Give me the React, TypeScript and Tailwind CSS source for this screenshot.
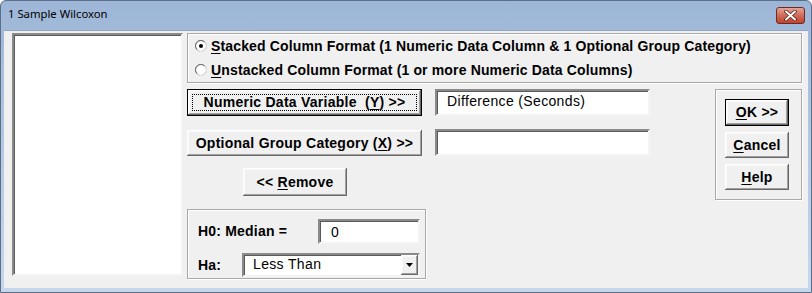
import React from "react"

const ui = { fontFamily: '"Liberation Sans", Arial, sans-serif' }
const title = { fontFamily: '"Noto Sans", "Open Sans", sans-serif' }

// 3D raised edge used on every push button
const raised =
  "bg-[#f0f0f0] shadow-[inset_-1px_-1px_0_#696969,inset_1px_1px_0_#ffffff,inset_-2px_-2px_0_#a0a0a0,inset_2px_2px_0_#f8f8f8]"
const sunken =
  "bg-white border-2 border-t-[#8a8a8a] border-l-[#8a8a8a] border-b-[#f4f4f4] border-r-[#f4f4f4] shadow-[inset_1px_1px_0_#5a5a5a]"
const etched = "border border-[#a9a9a9] shadow-[1px_1px_0_#ffffff,inset_1px_1px_0_#ffffff]"

function U({ children }: { children: React.ReactNode }) {
  return <span className="underline underline-offset-2 decoration-1">{children}</span>
}

function Radio({ checked }: { checked?: boolean }) {
  return (
    <svg width="12" height="12" viewBox="0 0 12 12" className="shrink-0">
      <circle cx="6" cy="6" r="5.5" fill="#ffffff" stroke="#a0a0a0" />
      <path d="M2 9.5 A5 5 0 0 1 9.5 2" stroke="#6a6a6a" fill="none" />
      <path d="M10 2.5 A5 5 0 0 1 2.5 10" stroke="#e8e8e8" fill="none" />
      {checked && <circle cx="6" cy="6" r="2" fill="#000000" />}
    </svg>
  )
}

function Button({
  children,
  isDefault,
  focus,
  className = "",
}: {
  children: React.ReactNode
  isDefault?: boolean
  focus?: boolean
  className?: string
}) {
  return (
    <div
      className={`${raised} ${isDefault ? "border border-black" : ""} flex items-center justify-center text-[14px] tracking-[0.25px] font-bold text-black ${className}`}
    >
      {focus ? (
        <div className="border border-dotted border-black w-[calc(100%-8px)] h-[calc(100%-8px)] flex items-center justify-center">
          {children}
        </div>
      ) : (
        children
      )}
    </div>
  )
}

export default function App() {
  return (
    <div
      className="w-[812px] h-[293px] flex flex-col border border-[#5a6f88] rounded-t-[6px] bg-gradient-to-b from-[#9db6d7] via-[#b3c8e3] to-[#c6d7ec] px-[3px] pb-[4px]"
      style={ui}
    >
      {/* title bar */}
      <div className="h-[29px] flex items-center justify-between pl-[4px] pr-[3px] pb-[3px]">
        <span className="text-[11.3px] text-black" style={title}>
          1 Sample Wilcoxon
        </span>
        <div className="w-[29px] h-[17px] mt-[2px] rounded-[3px] border border-[#6b2a24] bg-gradient-to-b from-[#e4a597] via-[#cf6a58] to-[#c2412e] flex items-center justify-center">
          <svg width="13" height="11" viewBox="0 0 13 11">
            <path d="M2 1.5 L11 9.5 M11 1.5 L2 9.5" stroke="#5a1e18" strokeWidth="3.6" strokeLinecap="round" />
            <path d="M2 1.5 L11 9.5 M11 1.5 L2 9.5" stroke="#ffffff" strokeWidth="2" strokeLinecap="round" />
          </svg>
        </div>
      </div>

      {/* client area */}
      <div className="flex-1 bg-[#f0f0f0] flex pl-[8px] pt-[3px] border-t border-[#8fa6c2]">
        <div className={`${sunken} w-[171px] h-[243px] -mt-px`} />

        <div className="ml-[4px] w-[615px] flex flex-col -mt-px">
          {/* input format */}
          <div className={`${etched} h-[50px] flex flex-col justify-center gap-[8px] pl-[7px] text-[14px] tracking-[0.15px] font-bold`}>
            <div className="flex items-center gap-[4px] h-[16px]">
              <Radio checked />
              <span>
                <U>S</U>tacked Column Format (1 Numeric Data Column &amp; 1 Optional Group Category)
              </span>
            </div>
            <div className="flex items-center gap-[4px] h-[16px]">
              <Radio />
              <span>
                <U>U</U>nstacked Column Format (1 or more Numeric Data Columns)
              </span>
            </div>
          </div>

          <div className="flex mt-[6px]">
            {/* left controls */}
            <div className="w-[239px] flex flex-col">
              <Button isDefault focus className="w-[235px] h-[27px]">
                <span className="whitespace-pre">
                  Numeric Data Variable  (<U>Y</U>) &gt;&gt;
                </span>
              </Button>
              <Button className="w-[235px] h-[26px] mt-[14px]">
                <span className="whitespace-pre">
                  Optional Group Category (<U>X</U>) &gt;&gt;
                </span>
              </Button>
              <Button className="w-[104px] h-[28px] mt-[12px] ml-[56px]">
                <span>
                  &lt;&lt; <U>R</U>emove
                </span>
              </Button>
              <div className={`${etched} h-[70px] mt-[13px] flex flex-col pl-[10px] pr-[5px] text-[14px] tracking-[0.2px] font-bold`}>
                <div className="flex items-center justify-between mt-[9px]">
                  <span>H0: Median =</span>
                  <div className={`${sunken} w-[102px] h-[25px] pl-[11px] pt-[1px] font-normal`}>0</div>
                </div>
                <div className="flex items-center justify-between mt-[9px]">
                  <span>Ha:</span>
                  <div className={`${sunken} w-[178px] h-[24px] flex items-center justify-between pl-[9px] font-normal tracking-[0.35px]`}>
                    <span className="-mt-[2px]">Less Than</span>
                    <div className={`${raised} w-[17px] h-[20px] flex items-center justify-center`}>
                      <svg width="7" height="4" viewBox="0 0 7 4">
                        <path d="M0 0 H7 L3.5 4 Z" fill="#000000" />
                      </svg>
                    </div>
                  </div>
                </div>
              </div>
            </div>

            {/* variable text boxes */}
            <div className="ml-[9px] w-[215px] flex flex-col text-[14px] tracking-[0.35px]">
              <div className={`${sunken} h-[27px] pl-[10px]`}>Difference (Seconds)</div>
              <div className={`${sunken} h-[27px] mt-[13px]`} />
            </div>

            {/* action buttons */}
            <div className={`${etched} ml-[65px] w-[87px] h-[111px] flex flex-col gap-[6px] pl-[9px] pt-[9px]`}>
              <Button isDefault className="w-[64px] h-[27px]">
                <span>
                  <U>O</U>K &gt;&gt;
                </span>
              </Button>
              <Button className="w-[64px] h-[26px]">
                <span>
                  <U>C</U>ancel
                </span>
              </Button>
              <Button className="w-[64px] h-[26px]">
                <span>
                  <U>H</U>elp
                </span>
              </Button>
            </div>
          </div>
        </div>
      </div>
    </div>
  )
}
